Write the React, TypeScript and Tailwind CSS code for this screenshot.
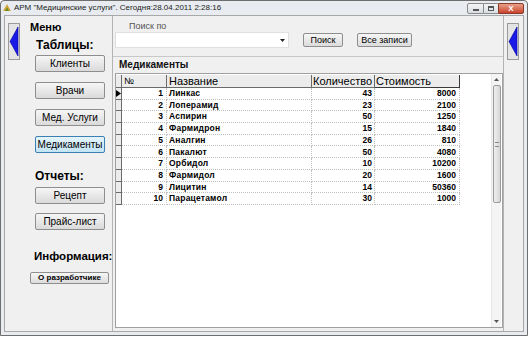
import React from 'react';

const rows = [
  { n: 1, name: 'Линкас', qty: 43, price: 8000 },
  { n: 2, name: 'Лоперамид', qty: 23, price: 2100 },
  { n: 3, name: 'Аспирин', qty: 50, price: 1250 },
  { n: 4, name: 'Фармидрон', qty: 15, price: 1840 },
  { n: 5, name: 'Аналгин', qty: 26, price: 810 },
  { n: 6, name: 'Пакалют', qty: 50, price: 4080 },
  { n: 7, name: 'Орбидол', qty: 10, price: 10200 },
  { n: 8, name: 'Фармидол', qty: 20, price: 1600 },
  { n: 9, name: 'Лицитин', qty: 14, price: 50360 },
  { n: 10, name: 'Парацетамол', qty: 30, price: 1000 },
];

const ArrowButton = () => (
  <div className="w-[12px] h-[37px] border border-[#9a9a9a] bg-[#e4e4e4] flex items-center justify-center">
    <svg width="10" height="33" viewBox="0 0 10 33">
      <polygon points="9,2 1,16.5 9,31" fill="#1a1ae6" stroke="#0000a0" strokeWidth="0.6" />
    </svg>
  </div>
);

const MenuButton = ({ label, active = false }: { label: string; active?: boolean }) => (
  <button
    className={
      'w-[70px] h-[17px] rounded-[2px] border text-[10px] leading-none text-black ' +
      (active
        ? 'border-[#3c7fb1] bg-gradient-to-b from-[#e5f4fc] to-[#c4e5f6]'
        : 'border-[#8e8e8e] bg-gradient-to-b from-[#f6f6f6] to-[#dadada]')
    }
  >
    {label}
  </button>
);

export default function App() {
  return (
    <div className="w-[528px] h-[338px] bg-white font-['Liberation_Sans',sans-serif] text-black">
      <div className="h-[336px] flex flex-col border border-[#6e6e6e] rounded-t-[4px] bg-[#e8ecf0]">
        {/* title bar */}
        <div className="h-[14px] flex items-center pl-[1px] pr-[3px]">
          <svg width="10" height="10" viewBox="0 0 10 10" className="mr-[2px]">
            <path d="M1 8 L5 1 L9 8 Z" fill="#d8a53a" />
            <path d="M3 8 L5 4 L7 8 Z" fill="#6b8e23" />
          </svg>
          <span className="text-[8px] leading-none text-[#222] whitespace-nowrap">
            АРМ "Медицинские услуги". Сегодня:28.04.2011 2:28:16
          </span>
          <div className="flex-1" />
          <div className="flex h-[11px] mt-[1px]">
            <div className="w-[17px] border border-[#8a8a8a] rounded-l-[2px] bg-gradient-to-b from-[#f4f4f4] to-[#d8dde2] flex items-end justify-center pb-[2px]">
              <div className="w-[6px] h-[2px] bg-[#555]" />
            </div>
            <div className="w-[14px] border-y border-[#8a8a8a] bg-gradient-to-b from-[#f4f4f4] to-[#d8dde2] flex items-center justify-center">
              <div className="w-[6px] h-[5px] border border-[#555] border-t-2" />
            </div>
            <div className="w-[26px] border border-[#8a3a2a] rounded-r-[2px] bg-gradient-to-b from-[#e8a08a] to-[#c8402a] flex items-center justify-center text-[8px] leading-none font-bold text-white">
              X
            </div>
          </div>
        </div>

        {/* body */}
        <div className="flex-1 flex mx-[3px] mb-[3px] border border-[#a8a8a8] bg-[#f0f0f0]">
          {/* left panel */}
          <div className="w-[108px] shrink-0 flex border-r border-[#b4b4b4]">
            <div className="pl-[3px] pt-[7px] w-[25px] shrink-0">
              <ArrowButton />
            </div>
            <div className="flex flex-col">
              <div className="text-[11px] font-bold leading-none mt-[6px]">Меню</div>
              <div className="text-[12px] font-bold leading-none mt-[6px] ml-[6px]">Таблицы:</div>
              <div className="flex flex-col gap-[10px] mt-[4px] ml-[5px]">
                <MenuButton label="Клиенты" />
                <MenuButton label="Врачи" />
                <MenuButton label="Мед. Услуги" />
                <MenuButton label="Медикаменты" active />
              </div>
              <div className="text-[12px] font-bold leading-none mt-[17px] ml-[5px]">Отчеты:</div>
              <div className="flex flex-col gap-[9px] mt-[5px] ml-[5px]">
                <MenuButton label="Рецепт" />
                <MenuButton label="Прайс-лист" />
              </div>
              <div className="text-[11.5px] font-bold leading-none mt-[21px] ml-[4px] whitespace-nowrap">Информация:</div>
              <button className="mt-[9px] w-[79px] h-[12px] rounded-[2px] border border-[#8e8e8e] bg-gradient-to-b from-[#f6f6f6] to-[#dcdcdc] text-[8px] font-bold leading-none">
                О разработчике
              </button>
            </div>
          </div>

          {/* main area */}
          <div className="w-[390px] shrink-0 flex flex-col">
            <div className="h-[41px] border-b border-[#c8c8c8] pl-[2px]">
              <div className="text-[9px] leading-none text-[#555] ml-[14px] mt-[6px]">Поиск по</div>
              <div className="flex items-center mt-[1px]">
                <div className="w-[174px] h-[16px] bg-white border border-[#e0e0e0] flex items-center justify-end pr-[3px]">
                  <svg width="5" height="3" viewBox="0 0 5 3">
                    <path d="M0 0 H5 L2.5 3 Z" fill="#222" />
                  </svg>
                </div>
                <button className="ml-[14px] w-[40px] h-[14px] rounded-[2px] border border-[#8e8e8e] bg-gradient-to-b from-[#f6f6f6] to-[#dcdcdc] text-[9px] leading-none">
                  Поиск
                </button>
                <button className="ml-[14px] w-[55px] h-[14px] rounded-[2px] border border-[#8e8e8e] bg-gradient-to-b from-[#f6f6f6] to-[#dcdcdc] text-[9px] leading-none">
                  Все записи
                </button>
              </div>
            </div>
            <div className="text-[10px] font-bold leading-none ml-[6px] mt-[3px] text-[#111]">Медикаменты</div>
            <div className="flex-1 mt-[3px] ml-[2px] mb-[3px] bg-white border border-[#a0a0a0] flex">
              <div className="flex-1 pt-[1px]">
                {/* header */}
                <div className="flex h-[13px] text-[11px] leading-none">
                  <div className="w-[6px] bg-[#ececec] border-r border-b border-[#6a6a6a]" />
                  <div className="w-[45px] bg-[#ececec] border-r border-b border-[#6a6a6a] pl-[2px] flex items-center text-[9px]">№</div>
                  <div className="w-[145px] bg-[#ececec] border-r border-b border-[#6a6a6a] pl-[2px] flex items-center">Название</div>
                  <div className="w-[63px] bg-[#ececec] border-r border-b border-[#6a6a6a] pl-[1px] flex items-center whitespace-nowrap overflow-hidden">Количество</div>
                  <div className="w-[85px] bg-[#ececec] border-r border-b border-[#3a3a3a] pl-[1px] flex items-center">Стоимость</div>
                </div>
                {rows.map((r) => (
                  <div key={r.n} className="flex h-[11.7px] text-[8.5px] font-bold leading-none">
                    <div className="w-[6px] bg-[#ececec] border-r border-b border-[#6a6a6a] flex items-center">
                      {r.n === 1 && (
                        <svg width="5" height="7" viewBox="0 0 5 7">
                          <path d="M0 0 L5 3.5 L0 7 Z" fill="#000" />
                        </svg>
                      )}
                    </div>
                    <div className="w-[45px] border-r border-b border-dotted border-[#c0c0c0] flex items-center justify-end pr-[3px]">{r.n}</div>
                    <div className="w-[145px] border-r border-b border-dotted border-[#c0c0c0] flex items-center pl-[2px] tracking-[0.2px]">{r.name}</div>
                    <div className="w-[63px] border-r border-b border-dotted border-[#c0c0c0] flex items-center justify-end pr-[2px]">{r.qty}</div>
                    <div className="w-[85px] border-r border-b border-dotted border-[#c0c0c0] flex items-center justify-end pr-[3px]">{r.price}</div>
                  </div>
                ))}
              </div>
              {/* scrollbar */}
              <div className="w-[10px] mr-[1px] flex flex-col items-center bg-[#f4f4f4] border-l border-[#e8e8e8]">
                <div className="h-[11px] flex items-center justify-center">
                  <svg width="5" height="3" viewBox="0 0 5 3">
                    <path d="M0 3 H5 L2.5 0 Z" fill="#555" />
                  </svg>
                </div>
                <div className="w-[8px] h-[118px] rounded-[2px] border border-[#9a9a9a] bg-gradient-to-r from-[#f0f0f0] to-[#d6d6d6] flex items-center justify-center">
                  <div className="w-[4px] h-[5px] border-y border-[#888]" />
                </div>
                <div className="flex-1" />
                <div className="h-[11px] flex items-center justify-center">
                  <svg width="5" height="3" viewBox="0 0 5 3">
                    <path d="M0 0 H5 L2.5 3 Z" fill="#555" />
                  </svg>
                </div>
              </div>
            </div>
          </div>

          {/* right strip */}
          <div className="flex-1 border-l border-[#b4b4b4] pl-[3px] pt-[7px]">
            <ArrowButton />
          </div>
        </div>
      </div>
    </div>
  );
}
